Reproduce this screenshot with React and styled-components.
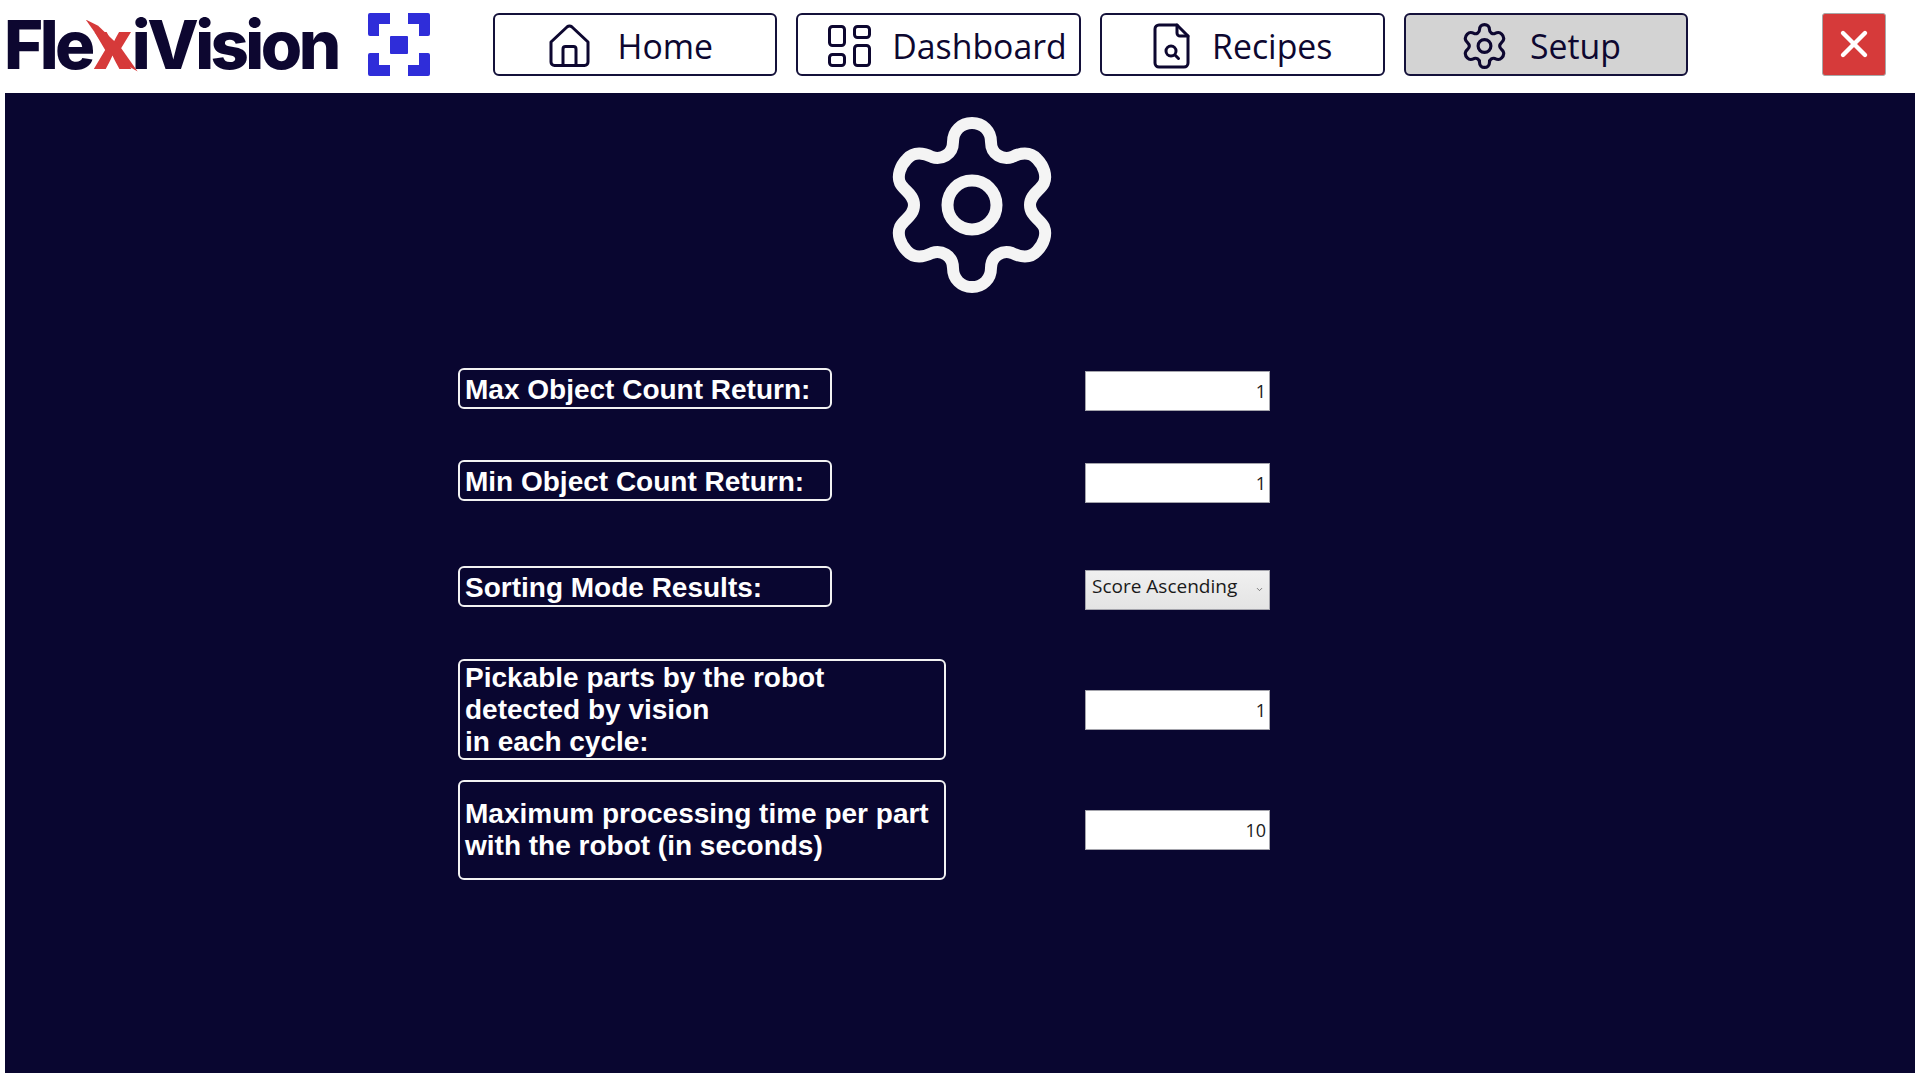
import React from "react";
import styled, { createGlobalStyle } from "styled-components";
import { X, ChevronDown } from "lucide-react";

const GlobalStyle = createGlobalStyle`
  html, body {
    margin: 0;
    background: #ffffff;
  }
`;

const Page = styled.div`
  width: 1919px;
  height: 1075px;
  display: flex;
  flex-direction: column;
  overflow: hidden;
`;

const Header = styled.header`
  height: 93px;
  box-sizing: border-box;
  padding: 12.5px 33px 0 5px;
  display: flex;
  align-items: flex-start;
`;

const Logo = styled.div`
  width: 487.5px;
  display: flex;
  align-items: flex-start;
  gap: 29px;
`;

const LogoText = styled.div`
  font-family: "Inter", "Liberation Sans", sans-serif;
  font-weight: 800;
  font-size: 67px;
  line-height: 63px;
  letter-spacing: -3.6px;
  color: #0d0730;
  width: 335px;
  margin-left: -1px;
  white-space: nowrap;
`;

const LogoX = styled.span`
  position: relative;
  margin: 0 3px 0 1px;
  color: #d63a3a;

  &::after {
    content: "";
    position: absolute;
    left: -7px;
    top: 16px;
    width: 52px;
    height: 52px;
    background: #d63a3a;
    clip-path: polygon(0 0, 24% 12%, 66% 52%, 100% 100%, 76% 86%, 34% 48%);
  }
`;

const Nav = styled.nav`
  display: flex;
  gap: 19.3px;
`;

const NavButton = styled.button`
  width: 284.5px;
  height: 63.5px;
  box-sizing: border-box;
  padding: 3px 0 0 ${(p) => p.$inset}px;
  display: flex;
  align-items: center;
  gap: ${(p) => p.$gap}px;
  background: ${(p) => (p.$active ? "#d3d3d3" : "#ffffff")};
  border: 2px solid #14113a;
  border-radius: 6px;
  font-family: "Open Sans", "Noto Sans", sans-serif;
  font-size: 33.8px;
  color: #0d0730;
  cursor: pointer;
`;

const NavIcon = styled.svg`
  flex: none;
  fill: none;
  stroke: #0d0730;
  stroke-width: 3;
  stroke-linecap: round;
  stroke-linejoin: round;
`;

const CloseButton = styled.button`
  margin-left: auto;
  width: 64px;
  height: 63.5px;
  padding: 0;
  display: flex;
  align-items: center;
  justify-content: center;
  background: #d63a3a;
  border: 1px solid #a8a8a8;
  border-radius: 3px;
  color: #ffffff;
`;

const Panel = styled.main`
  width: 1910px;
  height: 980px;
  margin-left: 5px;
  box-sizing: border-box;
  padding-top: 24px;
  background: #090630;
  display: flex;
  flex-direction: column;
`;

const GearWrap = styled.div`
  display: flex;
  justify-content: center;
  margin-left: 23px;
`;

const GearSvg = styled.svg`
  fill: none;
  stroke: ${(p) => p.$color};
  stroke-width: 12;
`;

const Form = styled.form`
  margin: 75px 0 0 453px;
  display: flex;
  flex-direction: column;
`;

const Row = styled.div`
  margin-top: ${(p) => p.$top}px;
  display: grid;
  grid-template-columns: 627px 185px;
  align-items: center;
`;

const Label = styled.label`
  align-self: start;
  width: ${(p) => (p.$wide ? 488 : 374)}px;
  height: ${(p) => p.$height}px;
  box-sizing: border-box;
  padding: ${(p) => (p.$wide ? 0 : 2)}px 0 0 5px;
  display: flex;
  align-items: center;
  border: 2px solid #f2f2f2;
  border-radius: 6px;
  font-family: "Liberation Sans", Arial, sans-serif;
  font-weight: 700;
  font-size: 28px;
  line-height: 32px;
  color: #ffffff;
`;

const NumberField = styled.input`
  width: 185px;
  height: 40px;
  box-sizing: border-box;
  margin-top: ${(p) => p.$nudge}px;
  padding: 0 3px 0 0;
  border: 1px solid #a4a4ac;
  border-radius: 0;
  background: #ffffff;
  text-align: right;
  font-family: "Open Sans", "Noto Sans", sans-serif;
  font-size: 18px;
  color: #1a1a1a;
  outline: none;
`;

const SelectWrap = styled.div`
  position: relative;
  width: 185px;
  height: 40px;
  margin-top: ${(p) => p.$nudge}px;
  color: #555;

  svg {
    position: absolute;
    right: 6px;
    top: 15px;
    pointer-events: none;
  }
`;

const SelectField = styled.select`
  appearance: none;
  width: 100%;
  height: 100%;
  box-sizing: border-box;
  padding: 0 0 8px 6px;
  border: 1px solid #a4a4ac;
  border-radius: 0;
  background: linear-gradient(#f0f0f0, #e4e4e4);
  font-family: "Open Sans", "Noto Sans", sans-serif;
  font-size: 19px;
  color: #1a1a1a;
  outline: none;
`;

const gearPath =
  "M0 -82 C11 -82 19 -74 19 -63 C19 -50 31 -45 40 -48 C48 -52 58 -54 65 -46 C72 -39 75 -29 72 -22 C68 -14 58 -11 58 0 " +
  "C58 11 68 14 72 22 C75 29 72 39 65 46 C58 54 48 52 40 48 C31 45 19 50 19 63 C19 74 11 82 0 82 " +
  "C-11 82 -19 74 -19 63 C-19 50 -31 45 -40 48 C-48 52 -58 54 -65 46 C-72 39 -75 29 -72 22 C-68 14 -58 11 -58 0 " +
  "C-58 -11 -68 -14 -72 -22 C-75 -29 -72 -39 -65 -46 C-58 -54 -48 -52 -40 -48 C-31 -45 -19 -50 -19 -63 C-19 -74 -11 -82 0 -82 Z";

const Gear = ({ width, height, color }) => (
  <GearSvg $color={color} width={width} height={height} viewBox="-80 -88 160 176">
    <path d={gearPath} />
    <circle cx="0" cy="0" r="24.5" />
  </GearSvg>
);

const BracketMark = () => (
  <svg width="62" height="63" viewBox="0 0 62 63" fill="#2f2dd9">
    <path d="M2 0 H22 V11 H11 V23 H2 A2 2 0 0 1 0 21 V2 A2 2 0 0 1 2 0 Z" />
    <path d="M60 0 H40 V11 H51 V23 H60 A2 2 0 0 0 62 21 V2 A2 2 0 0 0 60 0 Z" />
    <path d="M2 63 H22 V52 H11 V40 H2 A2 2 0 0 0 0 42 V61 A2 2 0 0 0 2 63 Z" />
    <path d="M60 63 H40 V52 H51 V40 H60 A2 2 0 0 1 62 42 V61 A2 2 0 0 1 60 63 Z" />
    <rect x="22" y="23" width="18" height="18" rx="1" />
  </svg>
);

const HomeIcon = () => (
  <NavIcon width="41" height="43" viewBox="0 0 41 43">
    <path d="M2 18 L18 3 Q20.5 1 23 3 L39 18 V38 A3.5 3.5 0 0 1 35.5 41.5 H5.5 A3.5 3.5 0 0 1 2 38 Z" />
    <path d="M14 41 V25 A2.5 2.5 0 0 1 16.5 22.5 H24.5 A2.5 2.5 0 0 1 27 25 V41" />
  </NavIcon>
);

const DashboardIcon = () => (
  <NavIcon width="43" height="42" viewBox="0 0 43 42">
    <rect x="1.5" y="1.5" width="15" height="19" rx="3" />
    <rect x="26.5" y="1.5" width="15" height="11" rx="3" />
    <rect x="1.5" y="29.5" width="15" height="11" rx="3" />
    <rect x="26.5" y="20.5" width="15" height="20" rx="3" />
  </NavIcon>
);

const RecipesIcon = () => (
  <NavIcon width="37" height="46" viewBox="0 0 37 46">
    <path d="M6 2 H24 L35 13 V40 A4 4 0 0 1 31 44 H6 A4 4 0 0 1 2 40 V6 A4 4 0 0 1 6 2 Z" />
    <path d="M24 2 V10 A3 3 0 0 0 27 13 H35" />
    <circle cx="18" cy="28" r="5" />
    <path d="M22 32 L25.5 35.5" />
  </NavIcon>
);

const navItems = [
  { label: "Home", icon: <HomeIcon />, inset: 54, gap: 28 },
  { label: "Dashboard", icon: <DashboardIcon />, inset: 30, gap: 21 },
  { label: "Recipes", icon: <RecipesIcon />, inset: 51, gap: 22 },
  { label: "Setup", icon: <Gear width={43} height={46} color="#0d0730" />, inset: 57, gap: 24, active: true },
];

const App = () => {
  return (
    <Page>
      <GlobalStyle />
      <Header>
        <Logo>
          <LogoText>
            Fle<LogoX>x</LogoX>iVision
          </LogoText>
          <BracketMark />
        </Logo>
        <Nav>
          {navItems.map((item) => (
            <NavButton key={item.label} $active={item.active} $inset={item.inset} $gap={item.gap}>
              {item.icon}
              {item.label}
            </NavButton>
          ))}
        </Nav>
        <CloseButton aria-label="Close">
          <X size={44} strokeWidth={2.4} />
        </CloseButton>
      </Header>
      <Panel>
        <GearWrap>
          <Gear width={160} height={176} color="#f4f4f4" />
        </GearWrap>
        <Form>
          <Row $top={0}>
            <Label $height={41}>Max Object Count Return:</Label>
            <NumberField readOnly value="1" $nudge={3} />
          </Row>
          <Row $top={49}>
            <Label $height={41}>Min Object Count Return:</Label>
            <NumberField readOnly value="1" $nudge={3} />
          </Row>
          <Row $top={63}>
            <Label $height={41}>Sorting Mode Results:</Label>
            <SelectWrap $nudge={4}>
              <SelectField defaultValue="Score Ascending">
                <option>Score Ascending</option>
                <option>Score Descending</option>
              </SelectField>
              <ChevronDown size={9} />
            </SelectWrap>
          </Row>
          <Row $top={49}>
            <Label $wide $height={101}>
              Pickable parts by the robot
              <br />
              detected by vision
              <br />
              in each cycle:
            </Label>
            <NumberField readOnly value="1" $nudge={0} />
          </Row>
          <Row $top={20}>
            <Label $wide $height={100}>
              Maximum processing time per part
              <br />
              with the robot (in seconds)
            </Label>
            <NumberField readOnly value="10" $nudge={0} />
          </Row>
        </Form>
      </Panel>
    </Page>
  );
};

export default App;
